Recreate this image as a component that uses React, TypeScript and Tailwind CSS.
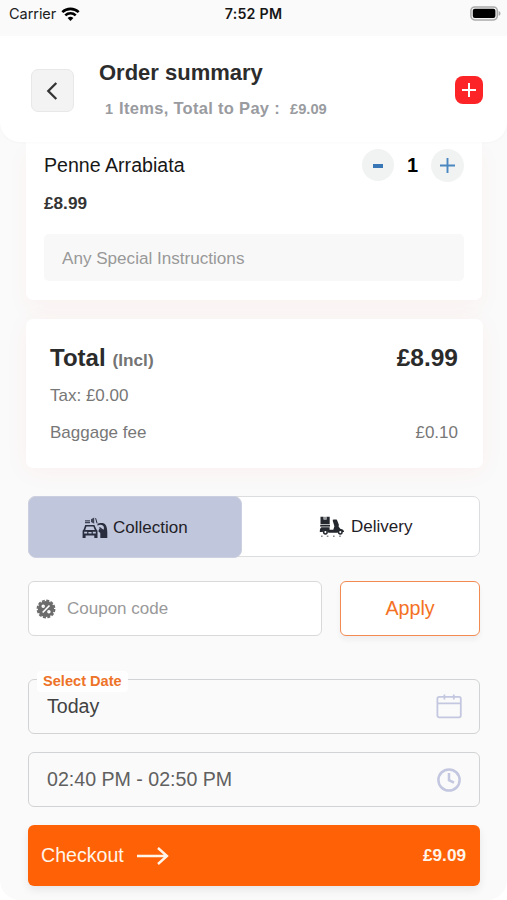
import React from "react";

function WifiIcon() {
  return (
    <svg width="19" height="15" viewBox="0 0 19 15" fill="none" stroke="#000" strokeWidth="2.6">
      <path d="M1.3 5.1a12 12 0 0 1 16.4 0" />
      <path d="M4.3 8.4a7.5 7.5 0 0 1 10.4 0" />
      <path d="M6.6 11.1a4.2 4.2 0 0 1 5.8 0L9.5 14z" fill="#000" stroke="none" />
    </svg>
  );
}

function BatteryIcon() {
  return (
    <svg width="31" height="15" viewBox="0 0 31 15">
      <rect x="0.9" y="0.9" width="26.4" height="13" rx="3.8" fill="#f4f4f4" stroke="#aaa" strokeWidth="1.5" />
      <rect x="2.8" y="2.8" width="22.6" height="9.2" rx="2" fill="#000" />
      <path d="M28.6 5c2.5.8 2.5 4 0 4.8z" fill="#aaa" />
    </svg>
  );
}

function PickupIcon() {
  return (
    <svg width="26" height="22" viewBox="0 0 26 22" fill="#292d3e">
      <path d="M3 3.2h5v1.3H3zM3 5.1h5v1.2H3zM9 2.2l3.2-1.7v6.2L9 5z" opacity=".85" />
      <path d="M13.6 1.2l1.5 5.2" stroke="#292d3e" strokeWidth="1" />
      <path d="M3.2 8h9.2l2.1 4.6 1 1.2V21h-3.2v-2.5H3.6V21H.6v-7.2l1-1.2zm1.2 1.5L3.2 13h9.6l-1.4-3.5zM2.2 14.8v1.6h3v-1.6zm8.6 0v1.6h3v-1.6zM6.4 15v1.5h3.2V15z" fillRule="evenodd" />
      <path d="M15.5 7.1c2-1.4 6-1.6 7.8.5 1.5 1.8 2 5 2 8V21h-7v-5l-2-1.8 1-2.5 4 1.2c1.2-1.6.6-3.5-.5-4.4-1.4-1-3.5-1-5.3.2z" />
      <path d="m17.4 10.5 4.5 3.5" stroke="#292d3e" strokeWidth="1.5" />
    </svg>
  );
}

function ScooterIcon() {
  return (
    <svg width="26" height="22" viewBox="0 0 26 22" fill="#25282e">
      <path d="M1.5.8h3v2.8h3.2V.8h3v7.4H1.5z" />
      <path d="M4.8.8h2.8v2.2H4.8z" opacity=".45" />
      <path d="M1.2 8.9H11v1.7H1.2z" />
      <path d="M2.2 11.2h8.4v2.6h3.7l1.1-3.6-1.6-5.1 1-1.3h3.1l1.9 4.6-.1 2.3 1.9 2.4c2.3.1 3.5 1.5 3.5 3h-2.1a2.6 2.6 0 0 0-4.4.6H9.4a3.1 3.1 0 0 0-5.9-.6H.8c0-2 .2-3.8 1.4-4.9z" />
      <circle cx="6.4" cy="16.1" r="1.8" fill="#fff" stroke="#25282e" strokeWidth="1.5" />
      <circle cx="21.3" cy="16.1" r="1.8" fill="#fff" stroke="#25282e" strokeWidth="1.5" />
      <path d="M13.8 4.3h3.7" stroke="#25282e" strokeWidth="1.3" />
      <path d="M2 20.2h1.6M7.8 20.2h1.6M14 20.2h1.6M20.2 20.2h1.6" stroke="#85888e" strokeWidth="1.4" />
    </svg>
  );
}

function CouponIcon() {
  return (
    <svg width="20" height="20" viewBox="0 0 20 20">
      <circle cx="10" cy="10" r="8.1" fill="#6b6b6b" />
      <circle cx="10" cy="10" r="8.5" fill="none" stroke="#6b6b6b" strokeWidth="1.8" strokeDasharray="3 1.45" />
      <g stroke="#fff" strokeWidth="1.7" fill="none">
        <path d="m6.7 13.5 6.8-7" />
        <circle cx="7.2" cy="7.2" r="1" strokeWidth="1.5" />
        <circle cx="12.9" cy="12.8" r="1" strokeWidth="1.5" />
      </g>
    </svg>
  );
}

function CalendarIcon() {
  return (
    <svg width="26" height="25" viewBox="0 0 26 25" fill="none" stroke="#c3c7df" strokeWidth="1.8">
      <rect x="1.4" y="2.8" width="23.4" height="20.5" rx="1.8" />
      <path d="M1.4 9.3h23.4M8.4.6v5M17.8.6v5" />
    </svg>
  );
}

function ClockIcon() {
  return (
    <svg width="26" height="26" viewBox="0 0 26 26" fill="none" stroke="#c3c7df" strokeWidth="2.5">
      <circle cx="13" cy="13" r="10.6" />
      <path d="M13 6v7.2l5 2.5" />
    </svg>
  );
}

export default function App() {
  return (
    <div className="h-[900px] w-[507px] overflow-hidden bg-white font-['Liberation_Sans',Arial,sans-serif]">
      <div className="flex h-full flex-col overflow-hidden rounded-b-[20px] bg-[#fafafa]">
        <div className="grid h-9 shrink-0 grid-cols-[1fr_auto_1fr] items-start pt-[5px] pr-1.5 pl-[9px] font-[Inter,sans-serif]">
          <div className="flex items-center gap-[5px] text-[14.5px] leading-[18px] tracking-[-0.05px] text-[#202020]">
            <span>Carrier</span>
            <WifiIcon />
          </div>
          <span className="-ml-[3px] text-[14.2px] leading-[18px] font-semibold tracking-[0.25px] text-[#161616]">7:52 PM</span>
          <div className="flex justify-end pt-px"><BatteryIcon /></div>
        </div>

        <header className="z-10 flex h-[106px] shrink-0 items-start rounded-b-[20px] bg-white pr-6 pl-8 shadow-[0_1px_3px_rgba(0,0,0,0.025)]">
          <button aria-label="Back" className="mt-[33px] -ml-px flex h-[43px] w-[43px] items-center justify-center rounded-[7px] border border-[#e8e8e8] bg-[#f3f3f3] pr-0.5">
            <svg width="12" height="18" viewBox="0 0 12 18" fill="none" stroke="#333" strokeWidth="2.3">
              <path d="m10.3 1-8 8 8 8" />
            </svg>
          </button>
          <div className="ml-[25px] flex-1 pt-[23px]">
            <h1 className="text-[22px] leading-[28px] font-bold text-[#2c2c2c]">Order summary</h1>
            <div className="mt-[9px] flex h-6 items-baseline pl-1.5 font-bold whitespace-nowrap text-[#999b9f]">
              <span className="text-[14.5px]">1</span>
              <span className="ml-[6px] text-[16.5px] leading-6 tracking-[0.3px]">Items, Total to Pay :</span>
              <span className="ml-[10px] text-[14.7px]">£9.09</span>
            </div>
          </div>
          <button aria-label="Add" className="mt-10 flex size-7 items-center justify-center rounded-lg bg-[#fd2427]">
            <svg width="14" height="14" viewBox="0 0 14 14" stroke="#fff" strokeWidth="2">
              <path d="M7 0v14M0 7h14" />
            </svg>
          </button>
        </header>

        <main className="flex flex-1 flex-col pr-[27px] pl-7">
          <section className="-mr-0.5 -ml-0.5 h-[158px] shrink-0 rounded-b-[7px] bg-white px-[18px] pt-[7px] shadow-[0_10px_22px_rgba(255,85,45,0.045)]">
            <div className="flex h-8 items-center">
              <h2 className="flex-1 text-[19.6px] leading-8 text-[#171717]">Penne Arrabiata</h2>
              <button aria-label="Decrease quantity" className="flex size-8 items-center justify-center rounded-full bg-[#f1f2f2]">
                <span className="mt-0.5 h-1 w-2.5 bg-[#3976b5]" />
              </button>
              <span className="w-[37px] text-center text-[20px] font-bold text-black">1</span>
              <button aria-label="Increase quantity" className="flex size-[33px] items-center justify-center rounded-full bg-[#f1f2f2]">
                <svg width="15" height="15" viewBox="0 0 15 15" stroke="#4a86c0" strokeWidth="1.9">
                  <path d="M7.5 0v15M0 7.5h15" />
                </svg>
              </button>
            </div>
            <p className="mt-3 text-[17.2px] leading-5 font-bold text-[#343434]">£8.99</p>
            <div className="mt-[21px] flex h-[47px] items-center rounded-[5px] bg-[#f8f8f8] pt-0.5 pl-[18px] text-[17.1px] text-[#999]">Any Special Instructions</div>
          </section>

          <section className="-mr-[3px] -ml-0.5 mt-[19px] h-[149px] shrink-0 rounded-[7px] bg-white pr-[25px] pl-6 pt-[23px] shadow-[0_4px_24px_rgba(255,85,45,0.05)]">
            <div className="flex h-8 items-center justify-between font-bold text-[#2b2b2b]">
              <div className="flex items-baseline gap-[7px]"><span className="text-[24px]">Total</span><span className="text-[17.2px] text-[#747474]">(Incl)</span></div>
              <span className="text-[24.5px]">£8.99</span>
            </div>
            <p className="mt-3 text-[17px] leading-5 text-[#777]">Tax: £0.00</p>
            <div className="mt-[17px] flex justify-between text-[17px] leading-5 text-[#777]">
              <span>Baggage fee</span><span>£0.10</span>
            </div>
          </section>

          <div className="mt-[28px] flex h-[61px] shrink-0 rounded-[7px] border border-[#dcdddf] bg-white text-[17px] text-[#1f2127]">
            <button className="-mt-px -mb-[2px] -ml-px flex w-[214px] items-center gap-[5px] rounded-[8px] border border-[#cbcfdf] bg-[#c0c6dc] pl-[53px] pt-px">
              <PickupIcon /><span>Collection</span>
            </button>
            <button className="flex flex-1 items-center gap-[6px] pl-[77px]">
              <ScooterIcon /><span>Delivery</span>
            </button>
          </div>

          <div className="mt-6 flex h-[55px] shrink-0 gap-[18px]">
            <div className="flex w-[294px] items-center gap-[11px] rounded-[6px] border border-[#d9d9d9] bg-white pl-[7px] text-[17px] text-[#999]">
              <CouponIcon /><span>Coupon code</span>
            </div>
            <button className="flex-1 rounded-[6px] border-[1.5px] border-[#f28b52] bg-white pt-px text-[19.7px] text-[#f47124] shadow-[0_4px_5px_rgba(30,40,70,0.05)]">Apply</button>
          </div>

          <div className="relative mt-[43px] flex h-[55px] shrink-0 items-center rounded-[6px] border border-[#d2d3d4] pr-[17px] pl-[18px]">
            <span className="absolute -top-[9px] left-2 h-[21px] rounded bg-white px-1.5 text-[14.6px] leading-[21px] font-bold whitespace-nowrap text-[#ed7328]">Select Date</span>
            <span className="flex-1 pt-px text-[19.6px] text-[#424242]">Today</span>
            <CalendarIcon />
          </div>

          <div className="mt-[18px] flex h-[55px] shrink-0 items-center rounded-[6px] border border-[#d2d3d4] pr-[17px] pl-[18px]">
            <span className="flex-1 text-[19.6px] text-[#606060]">02:40 PM - 02:50 PM</span>
            <ClockIcon />
          </div>

          <button className="mt-[18px] flex h-[61px] shrink-0 items-center rounded-[6px] bg-[#ff6206] pr-[14px] pl-[13px] text-[#fff5ea] shadow-[0_4px_9px_rgba(0,0,0,0.08)]">
            <span className="text-[19.6px]">Checkout</span>
            <svg className="ml-3" width="33" height="20" viewBox="0 0 33 20" fill="none" stroke="#fff5ea" strokeWidth="2.4">
              <path d="M1 10h29M22 2l9 8-9 8" />
            </svg>
            <span className="ml-auto text-[17.2px] font-bold">£9.09</span>
          </button>
        </main>
      </div>
    </div>
  );
}
